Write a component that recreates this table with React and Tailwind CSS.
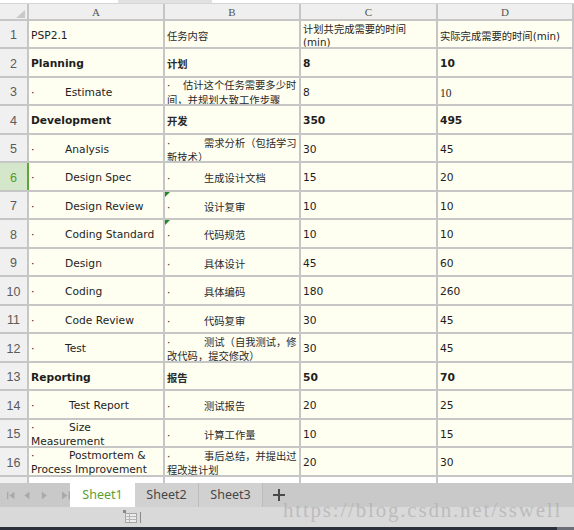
import React from "react";

const cellFont = "font-['DejaVu_Sans','Noto_Sans_CJK_SC',sans-serif]";

const A34 = (t) => ({ w: "w-[34px]", t });
const A38 = (t) => ({ w: "w-[38px]", t });
const B37 = (t) => ({ w: "w-[37px]", t });

const rows = [
  { a: ["PSP2.1"], b: ["任务内容"], c: ["计划共完成需要的时间", "(min)"], d: ["实际完成需要的时间(min)"], cLead: "leading-[13px]" },
  { bold: true, a: ["Planning"], b: ["计划"], c: ["8"], d: ["10"] },
  { a: [A34("Estimate")], b: [{ w: "w-[16px]", t: "估计这个任务需要多少时" }, "间，并规划大致工作步骤"], c: ["8"], d: ["10"], dSerif: true, bLead: "leading-[15px]" },
  { bold: true, a: ["Development"], b: ["开发"], c: ["350"], d: ["495"] },
  { a: [A34("Analysis")], b: [B37("需求分析（包括学习"), "新技术）"], c: ["30"], d: ["45"] },
  { a: [A34("Design Spec")], b: [B37("生成设计文档")], c: ["15"], d: ["20"], sel: true },
  { a: [A34("Design Review")], b: [B37("设计复审")], c: ["10"], d: ["10"], tri: true },
  { a: [A34("Coding Standard")], b: [B37("代码规范")], c: ["10"], d: ["10"], tri: true },
  { a: [A34("Design")], b: [B37("具体设计")], c: ["45"], d: ["60"] },
  { a: [A34("Coding")], b: [B37("具体编码")], c: ["180"], d: ["260"] },
  { a: [A34("Code Review")], b: [B37("代码复审")], c: ["30"], d: ["45"] },
  { a: [A34("Test")], b: [B37("测试（自我测试，修"), "改代码，提交修改）"], c: ["30"], d: ["45"] },
  { bold: true, a: ["Reporting"], b: ["报告"], c: ["50"], d: ["70"] },
  { a: [A38("Test Report")], b: [B37("测试报告")], c: ["20"], d: ["25"] },
  { a: [A38("Size"), "Measurement"], b: [B37("计算工作量")], c: ["10"], d: ["15"] },
  { a: [A38("Postmortem &"), "Process Improvement"], b: [B37("事后总结，并提出过"), "程改进计划"], c: ["20"], d: ["30"] },
];

function Lines({ lines, lead = "leading-[14px]" }) {
  return lines.map((l, i) =>
    typeof l === "string" ? (
      <div key={i} className={`${lead} whitespace-nowrap`}>{l}</div>
    ) : (
      <div key={i} className={`${lead} flex whitespace-nowrap`}>
        <span className={`${l.w} shrink-0`}>·</span>
        <span>{l.t}</span>
      </div>
    )
  );
}

function Cell({ children, className = "", tri = false }) {
  return (
    <div className={`relative bg-[#fefef1] flex flex-col justify-center pl-[2px] pt-[3px] overflow-hidden text-[#1e1e1e] ${className}`}>
      {tri && (
        <svg className="absolute left-0 top-0" width="5" height="5" viewBox="0 0 5 5">
          <polygon points="0,0 5,0 0,5" fill="#1f8a24" />
        </svg>
      )}
      {children}
    </div>
  );
}

function RowHead({ n, sel }) {
  return (
    <div
      className={`flex items-center justify-center pt-[3px] font-['Liberation_Sans',sans-serif] text-[12.5px] ${
        sel ? "bg-[#d5e7cb] text-[#4f9b2c] shadow-[2px_0_0_#5fa63a]" : "bg-[#f0f0f0] text-[#5a5a5a]"
      }`}
    >
      {n}
    </div>
  );
}

function Arrow({ dir, bar }) {
  return (
    <svg width="9" height="9" viewBox="0 0 9 9">
      {dir === "l" ? (
        <>
          {bar && <rect x="0" y="0.5" width="1.5" height="8" fill="#a9a9a9" />}
          <polygon points={bar ? "8,0.5 2.5,4.5 8,8.5" : "7,0.5 1.5,4.5 7,8.5"} fill="#a9a9a9" />
        </>
      ) : (
        <>
          <polygon points={bar ? "1,0.5 6.5,4.5 1,8.5" : "2,0.5 7.5,4.5 2,8.5"} fill="#a9a9a9" />
          {bar && <rect x="7.5" y="0.5" width="1.5" height="8" fill="#a9a9a9" />}
        </>
      )}
    </svg>
  );
}

export default function App() {
  return (
    <div className="relative w-[574px] h-[530px] overflow-hidden bg-white">
      {/* top strip */}
      <div className="flex h-[4px] border-b border-[#d6d6d6]">
        <div className="w-[118px] bg-white" />
        <div className="w-[94px] bg-[#e1e1e1]" />
        <div className="flex-1 bg-white" />
      </div>

      {/* grid */}
      <div
        className={`grid grid-cols-[27px_134px_134px_135px_134px] grid-rows-[15px_26px_27px_26px_27px_26px_27px_26px_27px_26px_27px_26px_27px_26px_27px_26px_27px_6px] gap-[2px] pr-[2px] bg-[#c6c6c6] ${cellFont}`}
      >
        {/* header row */}
        <div className="relative bg-[#efefef]">
          <svg className="absolute left-[16px] top-[6px]" width="9" height="8" viewBox="0 0 9 8">
            <polygon points="9,0 9,8 0,8" fill="#c9c9c9" />
          </svg>
        </div>
        {["A", "B", "C", "D"].map((l) => (
          <div key={l} className="bg-[#efefef] flex items-center justify-center pt-[1px] font-['Liberation_Serif',serif] text-[11px] text-[#555]">
            {l}
          </div>
        ))}

        {rows.map((r, i) => (
          <React.Fragment key={i}>
            <RowHead n={i + 1} sel={r.sel} />
            <Cell className={`text-[10.7px] ${r.bold ? "font-bold" : ""}`}>
              <Lines lines={r.a} />
            </Cell>
            <Cell tri={r.tri} className={`text-[10.3px] text-[#2a2a2a] ${r.bold ? "font-bold" : ""}`}>
              <Lines lines={r.b} lead={r.bLead} />
            </Cell>
            <Cell className={`${i === 0 ? "text-[10.3px]" : "text-[10.7px]"} ${r.bold ? "font-bold" : ""}`}>
              <Lines lines={r.c} lead={r.cLead} />
            </Cell>
            <Cell
              className={`${i === 0 ? "text-[10.3px]" : r.dSerif ? "font-['Liberation_Serif',serif] text-[11.5px]" : "text-[10.7px]"} ${
                r.bold ? "font-bold" : ""
              }`}
            >
              <Lines lines={r.d} />
            </Cell>
          </React.Fragment>
        ))}

        {/* partial row 17 */}
        <div className="bg-[#f0f0f0]" />
        <div className="bg-white" />
        <div className="bg-white" />
        <div className="bg-white" />
        <div className="bg-white" />
      </div>

      {/* sheet tab bar */}
      <div className="flex h-[24px] bg-[#c9c9c9] font-['Noto_Sans',sans-serif] text-[12.5px]">
        <div className="w-[70px] flex items-center pl-[7px] gap-[8px]">
          <Arrow dir="l" bar />
          <Arrow dir="l" />
          <Arrow dir="r" />
          <span className="ml-[5px] flex">
            <Arrow dir="r" bar />
          </span>
        </div>
        <div className="w-[65px] bg-white flex items-center justify-center text-[#5a9e33]">Sheet1</div>
        <div className="w-[64px] bg-[#d1d1d1] border-r border-[#bcbcbc] flex items-center justify-center text-[#474747]">Sheet2</div>
        <div className="w-[64px] bg-[#d1d1d1] border-r border-[#bcbcbc] flex items-center justify-center text-[#474747]">Sheet3</div>
        <div className="w-[32px] flex items-center justify-center">
          <svg width="12" height="12" viewBox="0 0 12 12">
            <rect x="5" y="0" width="2" height="12" fill="#4a4a4a" />
            <rect x="0" y="5" width="12" height="2" fill="#4a4a4a" />
          </svg>
        </div>
        <div className="flex-1" />
      </div>

      {/* status bar */}
      <div className="flex h-[20px] bg-[#d9d9d9] items-center">
        <div className="ml-[123px] flex">
          <svg width="20" height="14" viewBox="0 0 20 14">
            <rect x="0" y="0" width="3" height="3" fill="#8a8a8a" />
            <rect x="2.5" y="3.5" width="11" height="9" fill="#ececec" stroke="#a5a5a5" />
            <line x1="2.5" y1="6.5" x2="13.5" y2="6.5" stroke="#b5b5b5" />
            <line x1="2.5" y1="9.5" x2="13.5" y2="9.5" stroke="#b5b5b5" />
            <line x1="6.5" y1="3.5" x2="6.5" y2="12.5" stroke="#b5b5b5" />
            <rect x="17" y="2" width="1" height="11" fill="#8a8a8a" />
          </svg>
        </div>
      </div>

      {/* bottom dark bar */}
      <div className="flex h-[3px]">
        <div className="flex-1 bg-[#2c303d]" />
        <div className="w-[17px] bg-[#6b6e77]" />
      </div>

      {/* watermark */}
      <div className="absolute left-[283px] top-[500px] font-['Liberation_Serif',serif] text-[21px] leading-[21px] tracking-[1.8px] text-[rgba(175,175,175,0.7)] whitespace-nowrap pointer-events-none">
        https://blog.csdn.net/sswell
      </div>
    </div>
  );
}
